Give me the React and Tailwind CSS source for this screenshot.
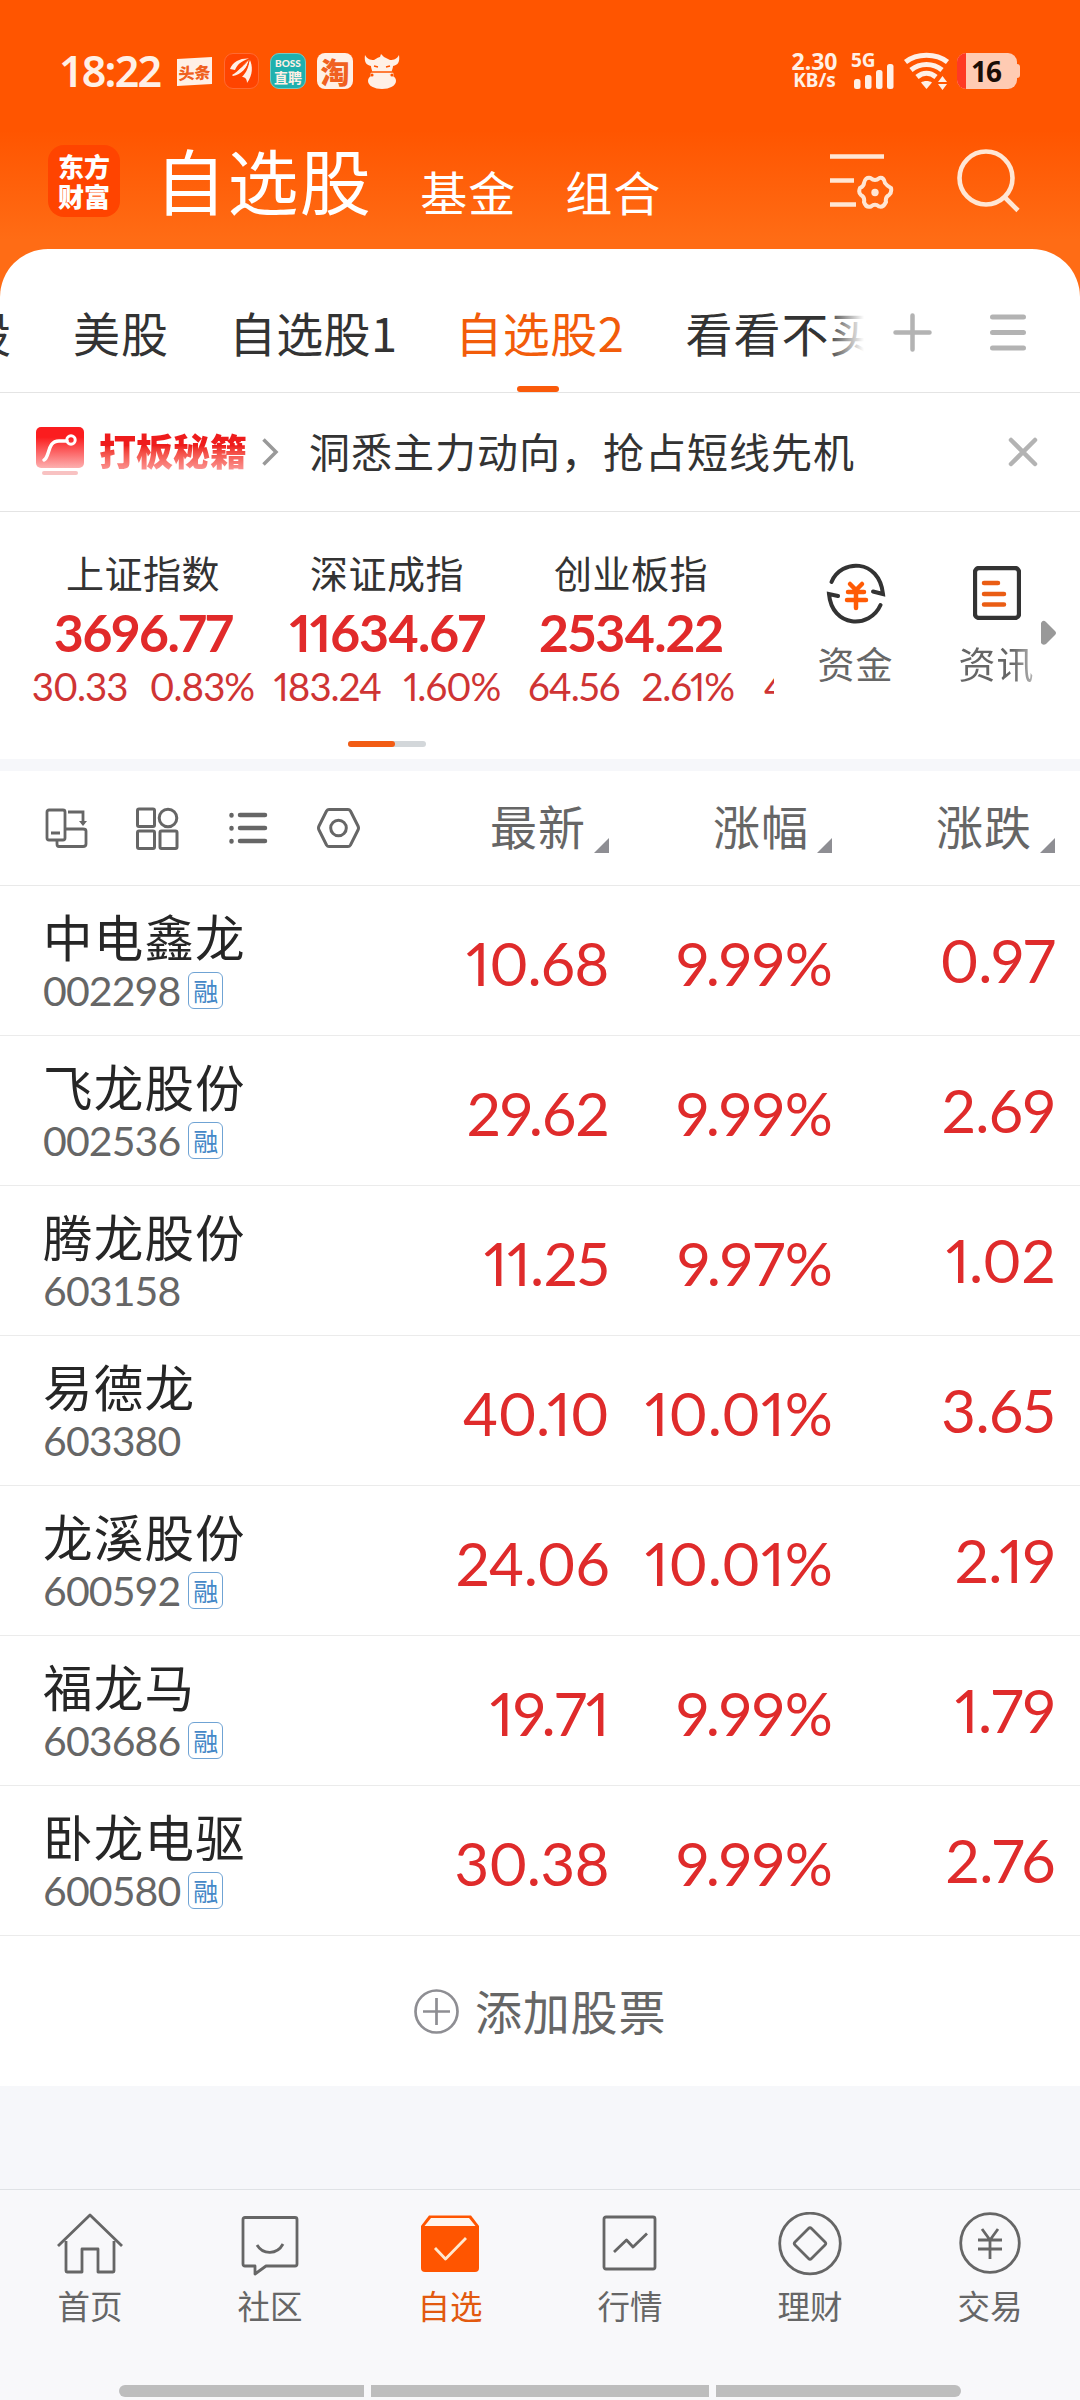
import React, { useState } from 'react';

const groups = [
  { name: '美股', className: 'ml-[73px] tracking-[1px]' },
  { name: '自选股1', className: 'ml-[60px] tracking-[0.3px]' },
  { name: '自选股2', className: 'ml-[58px] tracking-[0.5px]' },
  { name: '看看不买', className: 'ml-[61px] tracking-[1px]' },
];

const indexes = [
  { name: '上证指数', value: '3696.77', change: '30.33', percent: '0.83%' },
  { name: '深证成指', value: '11634.67', change: '183.24', percent: '1.60%' },
  { name: '创业板指', value: '2534.22', change: '64.56', percent: '2.61%' },
];

const stocks = [
  { name: '中电鑫龙', code: '002298', margin: true, price: '10.68', percent: '9.99%', change: '0.97' },
  { name: '飞龙股份', code: '002536', margin: true, price: '29.62', percent: '9.99%', change: '2.69' },
  { name: '腾龙股份', code: '603158', margin: false, price: '11.25', percent: '9.97%', change: '1.02' },
  { name: '易德龙', code: '603380', margin: false, price: '40.10', percent: '10.01%', change: '3.65' },
  { name: '龙溪股份', code: '600592', margin: true, price: '24.06', percent: '10.01%', change: '2.19' },
  { name: '福龙马', code: '603686', margin: true, price: '19.71', percent: '9.99%', change: '1.79' },
  { name: '卧龙电驱', code: '600580', margin: true, price: '30.38', percent: '9.99%', change: '2.76' },
];

function StatusBar() {
  return (
    <div className="flex h-[36px] items-center pl-[59px] pr-[60px] text-[#fff0e6]">
      <span className="w-[118px] font-['Noto_Sans',sans-serif] text-[43px] font-semibold leading-[36px] tracking-[-1.8px]">18:22</span>
      <div className="flex h-[27px] w-[35px] -skew-y-3 items-center justify-center bg-[#fff0e6] text-[16px] font-black leading-none text-[#f06020]">头条</div>
      <div className="ml-[12px] flex h-[36px] w-[35px] items-center justify-center rounded-[9px] border border-[#ff6a33] bg-[#ff4400]">
        <svg width="25" height="26" viewBox="0 0 25 26" fill="#fff0e6">
          <path d="M1 11C4 3 12 0 20 0.500C12 3 8 7 6 12Z" />
          <path d="M3 17C10 13 14 7 20 1C19 9 12 17 4 18Z" />
          <path d="M13 19C18 14 20 8 20.500 1C24 8 24 17 18 25C18 21 16 19 13 19Z" />
          <path d="M7 12.500C12 10 16 6 20 1M10 18C16 14 19 8 20.500 1" fill="none" stroke="#ff4400" strokeWidth="1" />
        </svg>
      </div>
      <div className="ml-[11px] flex h-[36px] w-[36px] flex-col items-center justify-center rounded-[9px] border border-[#79c9c0] bg-[#1fb0ae] leading-none">
        <span className="font-[Lato,sans-serif] text-[10px] font-black leading-[12px]">BOSS</span>
        <span className="text-[14px] font-bold leading-[17px]">直聘</span>
      </div>
      <div className="ml-[11px] flex h-[36px] w-[36px] items-center justify-center rounded-[8px] bg-[#fff0e6] text-[29px] font-black leading-none text-[#f06020]">淘</div>
      <svg className="ml-[11px]" width="36" height="36" viewBox="0 0 36 36">
        <path d="M1 2C3 6 6 7 10 7C13 5 15 4 16 4L17 1L20 4C22 5 24 6 26 7C30 7 33 6 35 2C36 9 34 12 29 13C29 16 27 18 28 20H8C9 18 7 16 7 13C2 12 0 9 1 2Z" fill="#fff0e6" />
        <path d="M7 19C14 16 22 16 29 19L30 23C28 21 8 21 6 23Z" fill="#fff0e6" />
        <ellipse cx="18" cy="28" rx="14" ry="8" fill="#fff0e6" />
        <path d="M10 13l4 1M26 13l-4 1M5 19h26" stroke="#ff5500" strokeWidth="1.5" />
        <circle cx="8" cy="22" r="1.6" fill="#ff5500" />
        <circle cx="28" cy="22" r="1.6" fill="#ff5500" />
      </svg>

      <div className="ml-auto flex w-[47px] flex-col items-center font-['Noto_Sans',sans-serif] font-bold">
        <span className="text-[23px] leading-[19px]">2.30</span>
        <span className="text-[19px] leading-[19px]">KB/s</span>
      </div>
      <div className="relative ml-[13px] h-[38px] w-[44px]">
        <span className="absolute left-0 top-[-2px] font-['Noto_Sans',sans-serif] text-[19px] font-bold leading-[20px]">5G</span>
        <svg width="44" height="38" viewBox="0 0 44 38" fill="#fff0e6">
          <rect x="3" y="27" width="6.5" height="10" rx="2.5" />
          <rect x="14" y="23" width="6.5" height="14" rx="2.5" />
          <rect x="25" y="18" width="6.5" height="19" rx="2.5" />
          <rect x="36" y="12" width="6.5" height="25" rx="2.5" />
        </svg>
      </div>
      <svg className="ml-[9px]" width="46" height="38" viewBox="0 0 46 38" fill="none" stroke="#fff0e6" strokeWidth="5">
        <path d="M1.500 10C13 1 32 1 43.500 10" />
        <path d="M7 18C16 10.500 29 10.500 38 18" />
        <path d="M13 25C19 20 26 20 32 25" />
        <path d="M17 30.500C20 28.500 25 28.500 28 30.500L22.500 37Z" fill="#fff0e6" stroke="none" />
        <path d="M34 30L38.500 24L43 30ZM34 32H43L38.500 38Z" fill="#fff0e6" stroke="none" />
      </svg>
      <div className="ml-[7px] flex items-center">
        <div className="flex h-[36px] w-[60px] items-center overflow-hidden rounded-[9px] bg-[#ffcbb3]">
          <span className="h-full w-[9px] bg-[#ff3a24]"></span>
          <span className="ml-[5px] font-['Noto_Sans',sans-serif] text-[28px] font-bold leading-[36px] tracking-[-1px] text-[#1a0d06]">16</span>
        </div>
        <span className="h-[14px] w-[3px] rounded-r-sm bg-[#ffcbb3]"></span>
      </div>
    </div>
  );
}

function Header() {
  return (
    <header className="h-[297px] bg-[linear-gradient(180deg,#ff5500_0px,#ff5500_130px,#ff6c15_240px)] pt-[53px]">
      <StatusBar />
      <div className="mt-[56px] flex h-[76px] items-start pl-[48px] text-white">
        <div className="flex h-[72px] w-[72px] flex-col items-center justify-center rounded-[16px] bg-[#ff4400] text-[26px] font-black leading-[30px]">
          <span>东方</span>
          <span>财富</span>
        </div>
        <h1 className="-mt-[3px] ml-[35px] text-[71px] leading-[72px] tracking-[1.4px]">自选股</h1>
        <span className="ml-[48px] mt-[20px] text-[47px] leading-[52px] tracking-[1px]">基金</span>
        <span className="ml-[49px] mt-[20px] text-[47px] leading-[52px] tracking-[1px]">组合</span>
        <svg className="ml-[169px] mt-[9px]" width="64" height="58" viewBox="0 0 64 58" fill="none" stroke="#ffe6d4" strokeWidth="4.600">
          <path d="M0 2.500H54M0 26.500H24M0 50.500H26" />
          <path d="M40.500 24Q45 28 49.500 24Q54 23 55 29Q57 32 61 34Q62 38.500 59 41Q55 43 56 48Q53 54 49 52.500Q45 49 41 52.500Q36 54 34 48Q35 43 31 41Q28 38.500 30 34Q34 32 34 29Q35 23 40.500 24Z" strokeWidth="4" />
          <circle cx="45" cy="38.500" r="3.700" fill="#ffe6d4" stroke="none" />
        </svg>
        <svg className="ml-[63px] mt-[4px]" width="64" height="66" viewBox="0 0 64 66" fill="none" stroke="#ffe6d4" strokeWidth="4.600">
          <circle cx="29" cy="29" r="26.500" />
          <path d="M47 47.500L61 61.500" />
        </svg>
      </div>
    </header>
  );
}

function GroupTabs({ active, onChange }) {
  return (
    <div className="flex h-[144px] border-b border-[#e4e4e4]">
      <div className="relative flex w-[864px] overflow-hidden">
        <span className="absolute -left-[36px] top-[57px] text-[47px] leading-[52px] text-[#333]">股</span>
        {groups.map((group) => (
          <button
            key={group.name}
            onClick={() => onChange(group.name)}
            className={`${group.className} flex shrink-0 flex-col items-center pt-[57px] text-[47px] leading-[52px] ${
              active === group.name ? 'text-[#f25c0a]' : 'text-[#333]'
            }`}
          >
            {group.name}
            {active === group.name && <span className="mr-[4px] mt-[28px] h-[6px] w-[42px] rounded-full bg-[#fa5a0a]"></span>}
          </button>
        ))}
        <div className="absolute right-0 top-0 h-[140px] w-[38px] bg-linear-to-r from-white/0 to-white"></div>
      </div>
      <svg className="ml-[29px] mt-[64px]" width="39" height="40" viewBox="0 0 39 40" stroke="#b3b3b3" strokeWidth="4.500" strokeLinecap="round">
        <path d="M2.500 19.500H36.500M19.500 2.500V36.500" />
      </svg>
      <svg className="ml-[58px] mt-[64px]" width="36" height="38" viewBox="0 0 36 38" stroke="#b3b3b3" strokeWidth="5" strokeLinecap="round">
        <path d="M2.500 4H33.500M2.500 19.500H33.500M2.500 35H33.500" />
      </svg>
    </div>
  );
}

function Notice({ onClose }) {
  return (
    <div className="flex h-[119px] items-center border-b border-[#e4e4e4] pl-[36px]">
      <svg width="48" height="50" viewBox="0 0 48 50" fill="none">
        <defs>
          <linearGradient id="notice" x1="0" y1="0" x2="0" y2="1">
            <stop offset="0.250" stopColor="#fb1d1f" />
            <stop offset="1" stopColor="#fdb0b0" />
          </linearGradient>
        </defs>
        <rect width="48" height="41" rx="5" fill="url(#notice)" />
        <rect x="6" y="44" width="36" height="4" rx="2" fill="#f8c2c2" />
        <path d="M8 33C14 30 11 14 23 14H31" stroke="#fff" strokeWidth="3.500" strokeLinecap="round" />
        <circle cx="35" cy="13" r="4.200" stroke="#fff" strokeWidth="3" />
      </svg>
      <span className="-mt-[4px] ml-[15px] bg-linear-to-b from-[#ee1c1c] from-40% to-[#fb9a9a] bg-clip-text text-[37px] font-black leading-[44px] text-transparent">打板秘籍</span>
      <svg className="ml-[15px]" width="17" height="28" viewBox="0 0 17 28" fill="none" stroke="#999" strokeWidth="3.500">
        <path d="M1.500 1.500L14 14L1.500 26.500" />
      </svg>
      <span className="-mt-[4px] ml-[30px] text-[41px] leading-[46px] tracking-[1px] text-[#333]">洞悉主力动向，抢占短线先机</span>
      <button onClick={onClose} className="ml-auto mr-[42px]">
        <svg width="30" height="30" viewBox="0 0 30 30" stroke="#b3b3b3" strokeWidth="4.500" strokeLinecap="round">
          <path d="M3 3L27 27M27 3L3 27" />
        </svg>
      </button>
    </div>
  );
}

function IndexPanel() {
  return (
    <div className="h-[247px] bg-white">
      <div className="flex h-[229px]">
        <div className="flex w-[774px] overflow-hidden pl-[21px] pt-[37px]">
          {indexes.map((item) => (
            <div key={item.name} className="flex w-[244px] shrink-0 flex-col items-center">
              <span className="text-[38px] leading-[46px] tracking-[0.5px] text-[#333]">{item.name}</span>
              <span className="mt-[14px] font-[Lato,sans-serif] text-[52px] font-bold proportional-nums leading-[46px] tracking-[-1.1px] text-[#e12a2a]">{item.value}</span>
              <div className="mt-[9px] flex gap-[22px] font-[Lato,sans-serif] text-[38.5px] proportional-nums leading-[44px] tracking-[-1px] text-[#cf3434]">
                <span>{item.change}</span>
                <span>{item.percent}</span>
              </div>
            </div>
          ))}
          <span className="ml-[11px] mt-[115px] shrink-0 font-[Lato,sans-serif] text-[39px] leading-[44px] text-[#cf3434]">4</span>
        </div>
        <div className="ml-[43px] flex w-[77px] flex-col items-center pt-[50px]">
          <svg width="60" height="62" viewBox="0 0 60 62" fill="none" stroke="#333" strokeWidth="4" strokeLinecap="round">
            <path d="M5.500 20C15 -3 53 -4 57 32L47 29.500" />
            <path d="M54.500 43C44 67 6 66 3 32L12 34" />
            <path d="M24 22L30 28L36 22M22 30H38M21 38H40M30 28V46" stroke="#ff5b05" strokeWidth="4.500" />
          </svg>
          <span className="mt-[17px] text-[37px] leading-[44px] tracking-[1px] text-[#666]">资金</span>
        </div>
        <div className="ml-[64px] flex w-[77px] flex-col items-center pt-[54px]">
          <svg width="48" height="54" viewBox="0 0 48 54" fill="none" strokeLinecap="round">
            <rect x="2" y="2" width="44" height="50" rx="4" stroke="#333" strokeWidth="4.300" />
            <path d="M11 17H25M11 28H31M11 38.500H31" stroke="#ea5d14" strokeWidth="4.500" />
          </svg>
          <span className="mt-[21px] bg-linear-to-r from-[#666] from-70% to-[#bbb] bg-clip-text text-[37px] leading-[44px] tracking-[1px] text-transparent">资讯</span>
        </div>
        <svg className="ml-[6px] mt-[108px]" width="16" height="26" viewBox="0 0 16 26">
          <path d="M0 3Q2 -1 5 2L14 11Q16 13 14 15L5 24Q2 26 0 23Z" fill="#999" />
        </svg>
      </div>
      <div className="ml-[348px] h-[6px] w-[78px] rounded-full bg-[#d3d7da]">
        <div className="h-full w-[47px] rounded-full bg-[#f25c14]"></div>
      </div>
    </div>
  );
}

function ColumnTitle({ label, className }) {
  return (
    <div className={`flex items-end justify-end ${className}`}>
      <span className="-mt-[3px] mb-[3px] text-[47px] leading-[50px] tracking-[1px] text-[#666]">{label}</span>
      <svg className="ml-[8px]" width="15" height="15" viewBox="0 0 15 15">
        <path d="M15 0V15H0Z" fill="#8e8e93" />
      </svg>
    </div>
  );
}

function TableHeader() {
  return (
    <div className="flex h-[115px] items-center border-b border-[#e9e9e9] pl-[45px]">
      <svg width="43" height="42" viewBox="0 0 43 42" fill="none" stroke="#666" strokeWidth="2.800">
        <rect x="2" y="3" width="18" height="30" rx="2" />
        <path d="M6 26H15M12 33V37Q12 39.500 14 39.500H38Q41 39.500 41 37V24Q41 22 38 22H20M23 5H38V17" />
        <path d="M34 14H42L38 19Z" fill="#666" stroke="none" />
      </svg>
      <svg className="ml-[48px]" width="43" height="43" viewBox="0 0 43 43" fill="none" stroke="#666" strokeWidth="3">
        <rect x="1.500" y="2" width="17" height="17.500" rx="1.500" />
        <circle cx="32" cy="11" r="8.800" />
        <rect x="1.500" y="24" width="17" height="17.500" rx="1.500" />
        <rect x="24" y="24" width="17" height="17.500" rx="1.500" />
      </svg>
      <svg className="ml-[50px]" width="39" height="34" viewBox="0 0 39 34" stroke="#666" strokeWidth="4.500" strokeLinecap="round">
        <path d="M2.500 4V4.500M2.500 17V17.500M2.500 30V30.500M11 4H36M11 17H36M11 30H36" />
      </svg>
      <svg className="ml-[49px]" width="43" height="42" viewBox="0 0 43 42" fill="none" stroke="#666" strokeWidth="3">
        <path d="M12 2.500H31Q32.500 2.500 33.500 4L41 19Q42 21 41 23L33.500 38Q32.500 39.500 31 39.500H12Q10.500 39.500 9.500 38L2 23Q1 21 2 19L9.500 4Q10.500 2.500 12 2.500Z" />
        <circle cx="21.500" cy="21" r="7.800" />
      </svg>
      <ColumnTitle label="最新" className="w-[249px]" />
      <ColumnTitle label="涨幅" className="w-[223px]" />
      <ColumnTitle label="涨跌" className="w-[223px]" />
    </div>
  );
}

function StockRow({ stock }) {
  return (
    <div className="flex h-[150px] border-b border-[#ebebeb] font-[Lato,sans-serif] text-[60px] proportional-nums leading-[60px] text-[#df2b2b]">
      <div className="w-[300px] pl-[43px] pt-[23px]">
        <div className="font-['Noto_Sans_CJK_SC',sans-serif] text-[49.5px] leading-[54px] tracking-[1.2px] text-[#262626]">{stock.name}</div>
        <div className="mt-[8px] flex items-center">
          <span className="text-[41px] tabular-nums leading-[39px] tracking-[-0.9px] text-[#666]">{stock.code}</span>
          {stock.margin && (
            <span className="ml-[8px] flex h-[37px] w-[35px] items-center justify-center rounded-[6px] border border-[#6fa3d4] font-['Noto_Sans_CJK_SC',sans-serif] text-[25px] leading-none tracking-normal text-[#4588c7]">融</span>
          )}
        </div>
      </div>
      <span className="w-[309px] pt-[47px] text-right tracking-[-0.6px]">{stock.price}</span>
      <span className="w-[224px] pt-[47px] text-right tracking-[0.1px]">{stock.percent}</span>
      <span className="w-[222px] pt-[44px] text-right tracking-[-0.4px]">{stock.change}</span>
    </div>
  );
}

const navItems = [
  {
    name: '首页',
    icon: (
      <>
        <path d="M1 34L33 3L65 34" />
        <path d="M9 29V59Q9 60 10 60H25V37H41V60H56Q57 60 57 59V29" />
      </>
    ),
  },
  {
    name: '社区',
    icon: (
      <>
        <path d="M8 5.500H58Q60 5.500 60 7.500V52Q60 54 58 54H29L18 62V54H8Q6 54 6 52V7.500Q6 5.500 8 5.500Z" />
        <path d="M20 33C26 43 40 43 46 32" />
      </>
    ),
  },
  {
    name: '自选',
    active: true,
    icon: (
      <>
        <path d="M4 14L12 3.500H54L62 14V56Q62 60 58 60H8Q4 60 4 56Z" fill="#ff5500" stroke="none" />
        <path d="M7.500 14L14 6H52L58.500 14Z" fill="#fff5ec" stroke="none" />
        <path d="M18 36L28.500 47L49 26" stroke="#ffe8cf" />
      </>
    ),
  },
  {
    name: '行情',
    icon: (
      <>
        <rect x="7" y="5" width="51" height="52" rx="2" />
        <path d="M17 40L29.500 28L36 35L50 21.500" />
      </>
    ),
  },
  {
    name: '理财',
    icon: (
      <>
        <circle cx="33" cy="31.500" r="30.300" />
        <path d="M31.500 16.500Q33 15 34.500 16.500L48 30Q49.500 31.500 48 33L34.500 46.500Q33 48 31.500 46.500L18 33Q16.500 31.500 18 30Z" />
      </>
    ),
  },
  {
    name: '交易',
    icon: (
      <>
        <circle cx="33" cy="31" r="29.300" />
        <path d="M25 17L33 28L41 17M21 28H45M21 37H45M33 28V47" />
      </>
    ),
  },
];

function BottomNav() {
  return (
    <nav className="h-[211px] border-t border-[#dfe2e5] bg-[#f8f8fa]">
      <div className="grid h-[195px] grid-cols-6 pt-[22px]">
        {navItems.map((item) => (
          <div key={item.name} className={`flex flex-col items-center ${item.active ? 'text-[#e2590f]' : 'text-[#666]'}`}>
            <svg width="66" height="64" viewBox="0 0 66 64" fill="none" stroke="currentColor" strokeWidth="2.800" strokeLinejoin="round">
              {item.icon}
            </svg>
            <span className="mt-[10px] text-[32.5px] leading-[38px]">{item.name}</span>
          </div>
        ))}
      </div>
      <div className="flex justify-center gap-[7px]">
        <div className="h-[12px] w-[245px] rounded-l-full bg-[#bdbdbd]"></div>
        <div className="h-[12px] w-[338px] bg-[#bdbdbd]"></div>
        <div className="h-[12px] w-[245px] rounded-r-full bg-[#bdbdbd]"></div>
      </div>
    </nav>
  );
}

function App() {
  const [active, setActive] = useState('自选股2');
  const [showNotice, setShowNotice] = useState(true);

  return (
    <div className="flex h-[2400px] w-[1080px] flex-col overflow-hidden bg-[#f6f7fa] font-['Noto_Sans_CJK_SC',sans-serif] whitespace-nowrap">
      <Header />
      <main className="relative z-10 -mt-[48px] flex-1">
        <div className="overflow-hidden rounded-t-[48px] bg-white">
          <GroupTabs active={active} onChange={setActive} />
          {showNotice && <Notice onClose={() => setShowNotice(false)} />}
          <IndexPanel />
        </div>
        <div className="mt-[12px] bg-white">
          <TableHeader />
          {stocks.map((stock) => (
            <StockRow key={stock.code} stock={stock} />
          ))}
          <button className="flex h-[150px] w-full items-center pl-[414px]">
            <svg width="45" height="45" viewBox="0 0 45 45" fill="none" stroke="#8e8e93" strokeWidth="2.700">
              <circle cx="22.500" cy="22.500" r="21" />
              <path d="M9 22.500H36M22.500 9V36" />
            </svg>
            <span className="-mt-[2px] ml-[16px] text-[47px] leading-[52px] tracking-[0.8px] text-[#666]">添加股票</span>
          </button>
        </div>
      </main>
      <BottomNav />
    </div>
  );
}

export default App;
